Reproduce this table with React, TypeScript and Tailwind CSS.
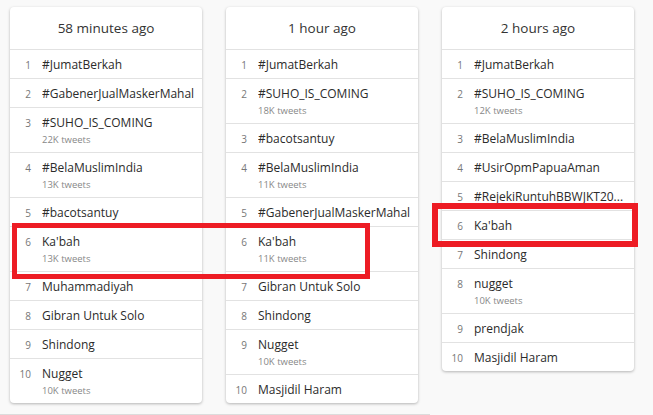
type Trend = { name: string; tweets?: string }

const columns: { title: string; trends: Trend[] }[] = [
  {
    title: "58 minutes ago",
    trends: [
      { name: "#JumatBerkah" },
      { name: "#GabenerJualMaskerMahal" },
      { name: "#SUHO_IS_COMING", tweets: "22K tweets" },
      { name: "#BelaMuslimIndia", tweets: "13K tweets" },
      { name: "#bacotsantuy" },
      { name: "Ka'bah", tweets: "13K tweets" },
      { name: "Muhammadiyah" },
      { name: "Gibran Untuk Solo" },
      { name: "Shindong" },
      { name: "Nugget", tweets: "10K tweets" },
    ],
  },
  {
    title: "1 hour ago",
    trends: [
      { name: "#JumatBerkah" },
      { name: "#SUHO_IS_COMING", tweets: "18K tweets" },
      { name: "#bacotsantuy" },
      { name: "#BelaMuslimIndia", tweets: "11K tweets" },
      { name: "#GabenerJualMaskerMahal" },
      { name: "Ka'bah", tweets: "11K tweets" },
      { name: "Gibran Untuk Solo" },
      { name: "Shindong" },
      { name: "Nugget", tweets: "10K tweets" },
      { name: "Masjidil Haram" },
    ],
  },
  {
    title: "2 hours ago",
    trends: [
      { name: "#JumatBerkah" },
      { name: "#SUHO_IS_COMING", tweets: "12K tweets" },
      { name: "#BelaMuslimIndia" },
      { name: "#UsirOpmPapuaAman" },
      { name: "#RejekiRuntuhBBWJKT20..." },
      { name: "Ka'bah" },
      { name: "Shindong" },
      { name: "nugget", tweets: "10K tweets" },
      { name: "prendjak" },
      { name: "Masjidil Haram" },
    ],
  },
]

function TrendCard({ title, trends }: { title: string; trends: Trend[] }) {
  return (
    <div className="w-[192px] shrink-0 bg-white rounded-[4px] shadow-[0_1px_3px_rgba(0,0,0,0.28)]">
      <div className="h-[42px] flex items-center justify-center text-[13.5px] text-[#333]">{title}</div>
      {trends.map((t, i) => (
        <div key={i} className="flex items-baseline border-t border-[#e2e2e2] pt-[5px] pb-[3px]">
          <span className="w-[21px] shrink-0 text-right text-[10px] text-[#777]">{i + 1}</span>
          <div className="ml-[11px] min-w-0 flex-1 pr-[4px]">
            <div className="truncate text-[12px] leading-[20px] text-[#2b2b2b]">{t.name}</div>
            {t.tweets && <div className="text-[9.5px] leading-[14px] mb-[2px] text-[#888]">{t.tweets}</div>}
          </div>
        </div>
      ))}
    </div>
  )
}

export default function App() {
  return (
    <div className="relative w-[653px] h-[415px] overflow-hidden bg-[#f9f9f9] font-['Open_Sans',sans-serif]">
      <div className="flex items-start gap-[24px] pl-[10px] pt-[7px]">
        {columns.map((c) => (
          <TrendCard key={c.title} title={c.title} trends={c.trends} />
        ))}
      </div>

      {/* highlight boxes */}
      <div className="absolute left-[12px] top-[223px] w-[358px] h-[56px] border-[5px] border-[#ed1c24]" />
      <div className="absolute left-[432px] top-[203px] w-[206px] h-[44px] border-[6px] border-[#ed1c24]" />

      <div className="absolute left-0 bottom-0 w-[430px] h-px bg-[#dcdcdc]" />
    </div>
  )
}
